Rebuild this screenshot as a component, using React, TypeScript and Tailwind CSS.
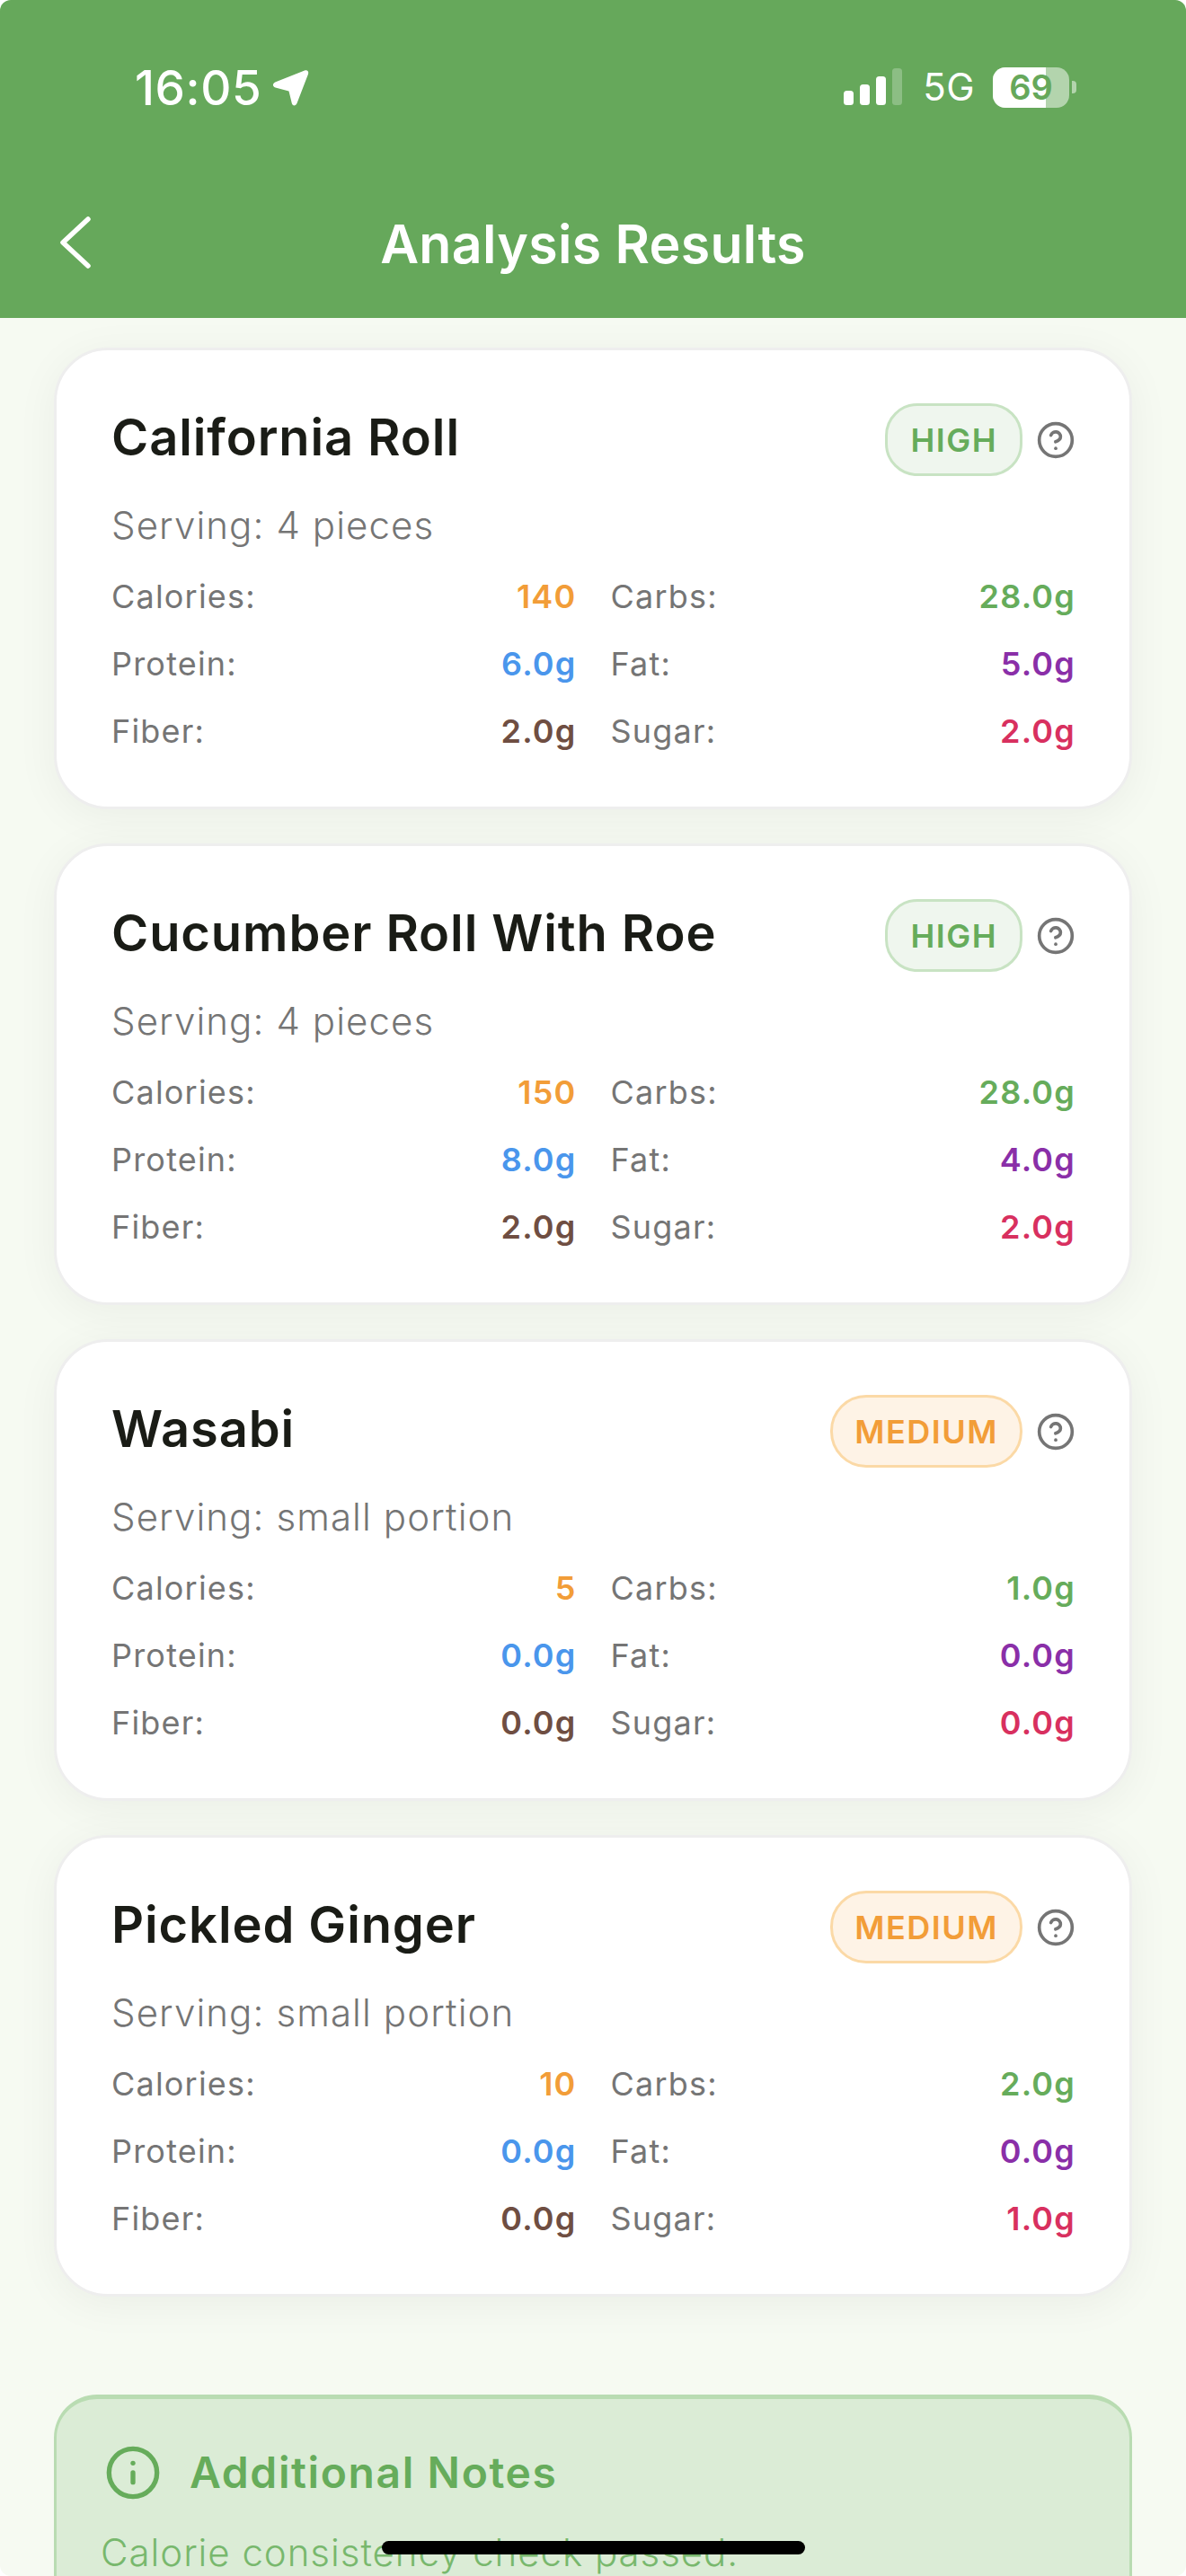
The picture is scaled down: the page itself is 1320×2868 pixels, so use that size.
import { CircleHelp, Info } from 'lucide-react';

type FoodItem = {
  name: string;
  serving: string;
  confidence: 'HIGH' | 'MEDIUM';
  calories: string;
  carbs: string;
  protein: string;
  fat: string;
  fiber: string;
  sugar: string;
};

const items: FoodItem[] = [
  { name: 'California Roll', serving: 'Serving: 4 pieces', confidence: 'HIGH', calories: '140', carbs: '28.0g', protein: '6.0g', fat: '5.0g', fiber: '2.0g', sugar: '2.0g' },
  { name: 'Cucumber Roll With Roe', serving: 'Serving: 4 pieces', confidence: 'HIGH', calories: '150', carbs: '28.0g', protein: '8.0g', fat: '4.0g', fiber: '2.0g', sugar: '2.0g' },
  { name: 'Wasabi', serving: 'Serving: small portion', confidence: 'MEDIUM', calories: '5', carbs: '1.0g', protein: '0.0g', fat: '0.0g', fiber: '0.0g', sugar: '0.0g' },
  { name: 'Pickled Ginger', serving: 'Serving: small portion', confidence: 'MEDIUM', calories: '10', carbs: '2.0g', protein: '0.0g', fat: '0.0g', fiber: '0.0g', sugar: '1.0g' },
];

const Nutrient = ({ label, value, color }: { label: string; value: string; color: string }) => (
  <div className="flex h-[50px] items-center justify-between">
    <span className="text-[36px] tracking-[1.2px] text-[#757575]">{label}</span>
    <span className={`text-[36px] font-semibold tracking-[1.2px] ${color}`}>{value}</span>
  </div>
);

const FoodCard = ({ item }: { item: FoodItem }) => (
  <div className="rounded-[60px] border-[3px] border-[#eeeeee] bg-white pt-[59px] pr-[60px] pb-[59px] pl-[61px] shadow-[0_8px_48px_rgba(0,0,0,0.05)]">
    <div className="flex h-[81px] items-center justify-between">
      <h2 className="mb-[6px] text-[56px] font-semibold tracking-[0.9px] text-[#1a1c16]">{item.name}</h2>
      <div className="flex items-center gap-[15px]">
        {item.confidence === 'HIGH' ? (
          <span className="flex h-[81px] items-center rounded-[36px] border-[3px] border-[#c8e3c3] bg-[#eff6ee] px-[25px] text-[36px] font-semibold tracking-[1.5px] text-[#66ac5b]">
            HIGH
          </span>
        ) : (
          <span className="flex h-[81px] items-center rounded-[40px] border-[3px] border-[#fbd9a6] bg-[#fef3e6] px-[24px] text-[36px] font-semibold tracking-[1.5px] text-[#f29d38]">
            MEDIUM
          </span>
        )}
        <CircleHelp size={44} strokeWidth={2} className="text-[#757575]" />
      </div>
    </div>
    <p className="mt-[30px] h-[50px] text-[42px] leading-[50px] font-light tracking-[1.1px] text-[#757575]">{item.serving}</p>
    <div className="mt-[29px] grid grid-cols-2 gap-x-[38px] gap-y-[25px]">
      <Nutrient label="Calories:" value={item.calories} color="text-[#f29d38]" />
      <Nutrient label="Carbs:" value={item.carbs} color="text-[#66ac5b]" />
      <Nutrient label="Protein:" value={item.protein} color="text-[#4a96ec]" />
      <Nutrient label="Fat:" value={item.fat} color="text-[#8a2fa8]" />
      <Nutrient label="Fiber:" value={item.fiber} color="text-[#6f4e42]" />
      <Nutrient label="Sugar:" value={item.sugar} color="text-[#d8305f]" />
    </div>
  </div>
);

const StatusBar = () => (
  <div className="flex h-[196px] items-start justify-between pt-[70px] pr-[122px] pl-[150px] text-white">
    <div className="flex items-center gap-[12px]">
      <span className="text-[53px] leading-[56px] font-medium tracking-[0.6px]">16:05</span>
      <svg width="42" height="42" viewBox="0 0 42 42" fill="white">
        <path d="M36 1.500c3-1 5 1 4 4L27.500 38c-1.300 3.400-5 3.200-5.700 0L18.500 24.500 3.500 20.500c-3.300-1-3.400-4.500-.3-6Z" />
      </svg>
    </div>
    <div className="flex items-center pt-[4px]">
      <svg width="66" height="42" viewBox="0 0 66 42" fill="white">
        <rect x="0" y="25" width="11" height="16" rx="3.500" />
        <rect x="18" y="18" width="11" height="23" rx="3.500" />
        <rect x="36" y="9" width="11" height="32" rx="3.500" />
        <rect x="54" y="0" width="11" height="41" rx="3.500" opacity="0.25" />
      </svg>
      <span className="ml-[22px] text-[42px] leading-[46px] font-normal tracking-[0.5px]">5G</span>
      <div className="relative ml-[20px] flex h-[45px] w-[85px] items-center justify-center overflow-hidden rounded-[14px] bg-white/50">
        <div className="absolute top-0 bottom-0 left-0 w-[59px] bg-white" />
        <span className="relative text-[38px] leading-[45px] font-semibold text-[#66a85b]">69</span>
      </div>
      <div className="ml-[3px] h-[14px] w-[5px] rounded-r-[4px] bg-white/50" />
    </div>
  </div>
);

const Header = () => (
  <div className="bg-[#66a85b]">
    <StatusBar />
    <div className="relative flex h-[158px] items-start justify-center pt-[44px]">
      <svg className="absolute top-[44px] left-[64px]" width="40" height="60" viewBox="0 0 40 60" fill="none" stroke="white" strokeWidth="5.500" strokeLinecap="round" strokeLinejoin="round">
        <path d="M34 4 6 30l28 26" />
      </svg>
      <h1 className="text-[59px] leading-[64px] font-semibold tracking-[0.3px] text-white">Analysis Results</h1>
    </div>
  </div>
);

const App = () => (
  <div className="relative h-[2868px] w-[1320px] overflow-hidden rounded-[12px] bg-[#f6faf2] font-['Inter',sans-serif]">
    <Header />
    <div className="flex flex-col gap-[38px] px-[60px] pt-[33px]">
      {items.map((item) => (
        <FoodCard key={item.name} item={item} />
      ))}
    </div>
    <div className="mx-[60px] mt-[109px] h-[400px] rounded-[48px] border-[3px] border-t-[5px] border-[#b9dcb2] bg-[#dbecd6] pt-[46px] pr-[50px] pl-[53px]">
      <div className="flex items-center gap-[31px]">
        <Info size={64} strokeWidth={2} className="text-[#66ac5b]" />
        <h3 className="text-[48px] font-semibold tracking-[1.6px] text-[#66ac5b]">Additional Notes</h3>
      </div>
      <p className="mt-[21px] -ml-[4px] text-[42px] font-light tracking-[0.95px] text-[#78b86d]">Calorie consistency check passed.</p>
    </div>
    <div className="absolute top-[2829px] left-[425px] h-[15px] w-[471px] rounded-full bg-black" />
  </div>
);

export default App;
